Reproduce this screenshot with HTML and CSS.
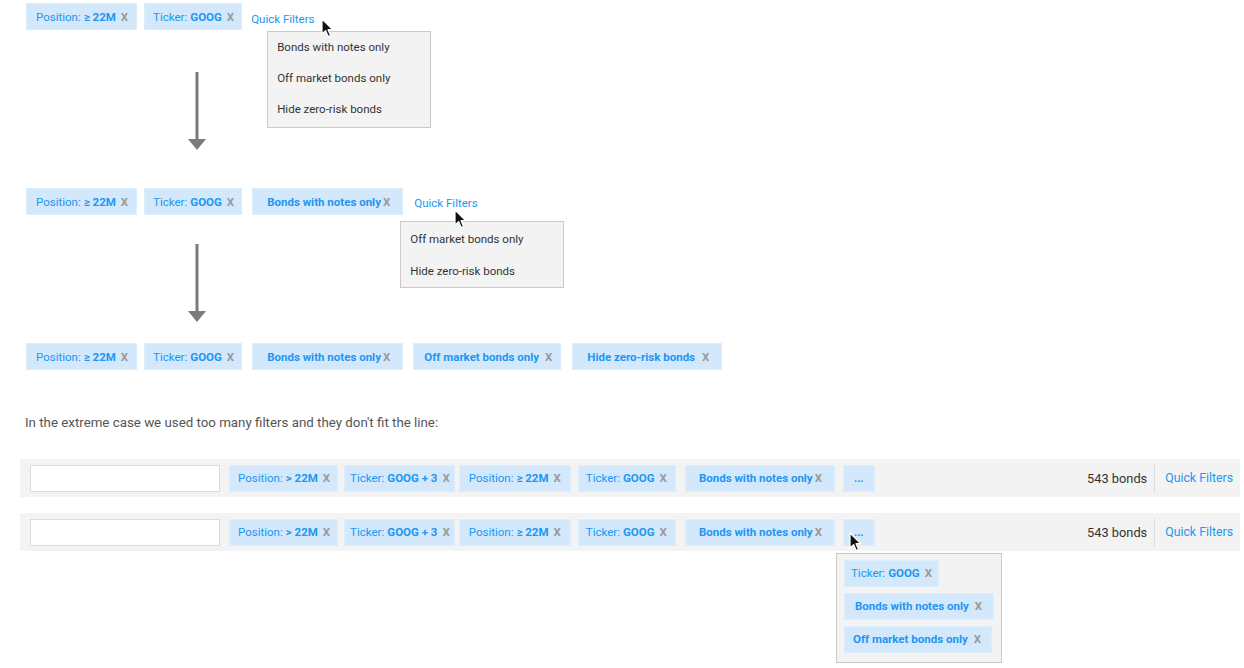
FILE: index.html
```html
<!DOCTYPE html>
<html>
<head>
<meta charset="utf-8">
<link rel="stylesheet" href="styles.css">
</head>
<body>
<div class="page">
  <div class="row row-1">
    <span class="chip">Position: <b>≥ 22M</b><span class="x">X</span></span>
    <span class="chip chip-t">Ticker: <b>GOOG</b><span class="x">X</span></span>
    <span class="qf qf-1">Quick Filters
      <div class="menu menu-1">
        <div class="menu-item">Bonds with notes only</div>
        <div class="menu-item">Off market bonds only</div>
        <div class="menu-item">Hide zero-risk bonds</div>
      </div>
      <svg class="cursor cursor-1" width="13" height="20" viewBox="0 0 13 20"><path d="M1 1 L1 16 L4.6 12.6 L7.2 18.6 L9.6 17.6 L7 11.7 L11.6 11.7 Z" fill="#111" stroke="#fff" stroke-width="1.2" stroke-linejoin="round"/></svg>
    </span>
  </div>

  <div class="arrow arrow-1"><svg width="20" height="78" viewBox="0 0 20 78"><rect x="8.5" y="0" width="3" height="68" fill="#7b7b7b"/><path d="M1 67 L19 67 L10 78 Z" fill="#7b7b7b"/></svg></div>

  <div class="row row-2">
    <span class="chip">Position: <b>≥ 22M</b><span class="x">X</span></span>
    <span class="chip chip-t">Ticker: <b>GOOG</b><span class="x">X</span></span>
    <span class="chip chip-b"><b>Bonds with notes only</b><span class="x x-tight">X</span></span>
    <span class="qf qf-2">Quick Filters
      <div class="menu menu-2">
        <div class="menu-item">Off market bonds only</div>
        <div class="menu-item">Hide zero-risk bonds</div>
      </div>
      <svg class="cursor cursor-2" width="13" height="20" viewBox="0 0 13 20"><path d="M1 1 L1 16 L4.6 12.6 L7.2 18.6 L9.6 17.6 L7 11.7 L11.6 11.7 Z" fill="#111" stroke="#fff" stroke-width="1.2" stroke-linejoin="round"/></svg>
    </span>
  </div>

  <div class="arrow arrow-2"><svg width="20" height="78" viewBox="0 0 20 78"><rect x="8.5" y="0" width="3" height="68" fill="#7b7b7b"/><path d="M1 67 L19 67 L10 78 Z" fill="#7b7b7b"/></svg></div>

  <div class="row row-3">
    <span class="chip">Position: <b>≥ 22M</b><span class="x">X</span></span>
    <span class="chip chip-t">Ticker: <b>GOOG</b><span class="x">X</span></span>
    <span class="chip chip-b"><b>Bonds with notes only</b><span class="x x-tight">X</span></span>
    <span class="chip chip-b chip-off"><b>Off market bonds only</b><span class="x">X</span></span>
    <span class="chip chip-b chip-hide"><b>Hide zero-risk bonds</b><span class="x">X</span></span>
  </div>

  <p class="note">In the extreme case we used too many filters and they don't fit the line:</p>

  <div class="bar bar-1">
    <span class="search"></span>
    <span class="chip bc-1">Position: <b>&gt; 22M</b><span class="x">X</span></span>
    <span class="chip bc-2">Ticker: <b>GOOG + 3</b><span class="x">X</span></span>
    <span class="chip bc-3">Position: <b>≥ 22M</b><span class="x">X</span></span>
    <span class="chip bc-4">Ticker: <b>GOOG</b><span class="x">X</span></span>
    <span class="chip chip-notes"><b>Bonds with notes only</b><span class="x x-tight">X</span></span>
    <span class="chip chip-more"><b class="dots">...</b></span>
    <span class="count">543 bonds</span>
    <span class="sep"></span>
    <span class="qf qf-lg">Quick Filters</span>
  </div>

  <div class="bar bar-2">
    <span class="search"></span>
    <span class="chip bc-1">Position: <b>&gt; 22M</b><span class="x">X</span></span>
    <span class="chip bc-2">Ticker: <b>GOOG + 3</b><span class="x">X</span></span>
    <span class="chip bc-3">Position: <b>≥ 22M</b><span class="x">X</span></span>
    <span class="chip bc-4">Ticker: <b>GOOG</b><span class="x">X</span></span>
    <span class="chip chip-notes"><b>Bonds with notes only</b><span class="x x-tight">X</span></span>
    <span class="chip chip-more"><b class="dots">...</b>
      <div class="overflow">
        <span class="chip chip-ov-t">Ticker: <b>GOOG</b><span class="x">X</span></span>
        <span class="chip chip-ov chip-ov-1"><b>Bonds with notes only</b><span class="x">X</span></span>
        <span class="chip chip-ov chip-ov-2"><b>Off market bonds only</b><span class="x">X</span></span>
      </div>
      <svg class="cursor cursor-3" width="13" height="20" viewBox="0 0 13 20"><path d="M1 1 L1 16 L4.6 12.6 L7.2 18.6 L9.6 17.6 L7 11.7 L11.6 11.7 Z" fill="#111" stroke="#fff" stroke-width="1.2" stroke-linejoin="round"/></svg>
    </span>
    <span class="count">543 bonds</span>
    <span class="sep"></span>
    <span class="qf qf-lg">Quick Filters</span>
  </div>
</div>
</body>
</html>
```

FILE: styles.css
```css
* { box-sizing: border-box; }
html, body { margin: 0; padding: 0; background: #fff; }
body {
  font-family: Roboto, "Liberation Sans", Arial, sans-serif;
  font-size: 11.5px;
  color: #333;
  width: 1244px;
  height: 668px;
  overflow: hidden;
}
.page { padding: 3px 0 0 0; }

.row {
  display: flex;
  align-items: center;
  gap: 7px;
  margin-left: 26px;
  height: 27px;
}
.row-2 { margin-top: 38px; }
.row-3 { margin-top: 21px; }

.chip {
  position: relative;
  display: inline-flex;
  align-items: center;
  height: 27px;
  padding: 0 8px 0 9px;
  background: #d3e8fb;
  border: 1px solid #dcedfc;
  color: #2196f3;
  font-size: 11.5px;
  white-space: nowrap;
}
.chip b { font-weight: 700; margin-left: 3px; }
.chip-b b, .chip-notes b, .chip-ov b, .chip-more > b { margin-left: 0; }
.x {
  color: #9a9a9a;
  font-weight: 700;
  margin-left: 5px;
}
.x-tight { margin-left: 2px; }
.chip-t { padding: 0 7px 0 8px; }
.chip-b { margin-left: 3px; padding: 0 12px 0 14px; }
.chip-off { margin-left: 3px; padding: 0 8px 0 10px; }
.chip-off .x { margin-left: 6px; }
.chip-hide { margin-left: 4px; padding: 0 12px 0 14px; }
.chip-hide .x { margin-left: 7px; }

.qf {
  position: relative;
  color: #2196f3;
  white-space: nowrap;
}
.qf-1 { margin-left: 2px; margin-top: 5px; }
.qf-2 { margin-left: 4px; margin-top: 3px; }

.menu {
  position: absolute;
  width: 164px;
  background: #f3f3f3;
  border: 1px solid #c9c9c9;
  padding: 0 0 2px 0;
  color: #333;
  font-size: 11.5px;
  z-index: 2;
}
.menu-item {
  height: 31px;
  line-height: 31px;
  padding-left: 9px;
}
.menu-1 { left: 16px; top: 19px; }
.menu-2 { left: -14px; top: 25px; padding: 1px 0 0 0; }
.menu-2 .menu-item { height: 32px; line-height: 32px; }

.cursor { position: absolute; z-index: 3; }
.cursor-1 { left: 70px; top: 6px; }
.cursor-2 { left: 40px; top: 13px; }
.cursor-3 { left: 5px; top: 12px; }

.arrow { margin-left: 187px; height: 78px; }
.arrow svg { display: block; }
.arrow-1 { margin-top: 42px; }
.arrow-2 { margin-top: 29px; }

.note {
  margin: 45px 0 0 25px;
  font-size: 13.3px;
  line-height: 16px;
  color: #555;
}

.bar {
  display: flex;
  align-items: center;
  gap: 4px;
  width: 1220px;
  height: 38px;
  margin-left: 20px;
  padding: 0 7px 0 10px;
  background: #f3f3f3;
}
.bar-1 { margin-top: 28px; }
.bar-2 { margin-top: 16px; }

.search {
  width: 190px;
  height: 27px;
  background: #fff;
  border: 1px solid #dcdcdc;
  margin-right: 5px;
}
.bar .bc-1 { padding: 0 7px 0 8px; }
.bar .bc-2 { padding: 0 4px 0 5px; margin-left: 2px; }
.bar .bc-3 { padding: 0 9px 0 9px; }
.bar .bc-4 { padding: 0 8px 0 7px; margin-left: 3px; }
.bar .chip-notes { padding: 0 12px 0 13px; margin-left: 5px; }
.bar .chip-more { padding: 0 10px; margin-left: 4px; }
.dots { font-size: 11px; }

.count {
  margin-left: auto;
  font-size: 12.8px;
  color: #333;
}
.sep {
  width: 1px;
  height: 29px;
  background: #dedede;
  margin: 0 6px 0 3px;
}
.qf-lg { font-size: 12.3px; }

.overflow {
  position: absolute;
  left: -8px;
  top: 33px;
  width: 166px;
  height: 110px;
  background: #f3f3f3;
  border: 1px solid #c9c9c9;
  padding: 6px 7px 0 7px;
  display: flex;
  flex-direction: column;
  align-items: flex-start;
  gap: 6px;
  z-index: 2;
}
.overflow .chip-ov-t { padding: 0 6px; }
.overflow .chip-ov { justify-content: space-between; }
.overflow .chip-ov-1 { width: 150px; padding: 0 11px 0 10px; }
.overflow .chip-ov-2 { width: 148px; padding: 0 10px 0 8px; }
```
